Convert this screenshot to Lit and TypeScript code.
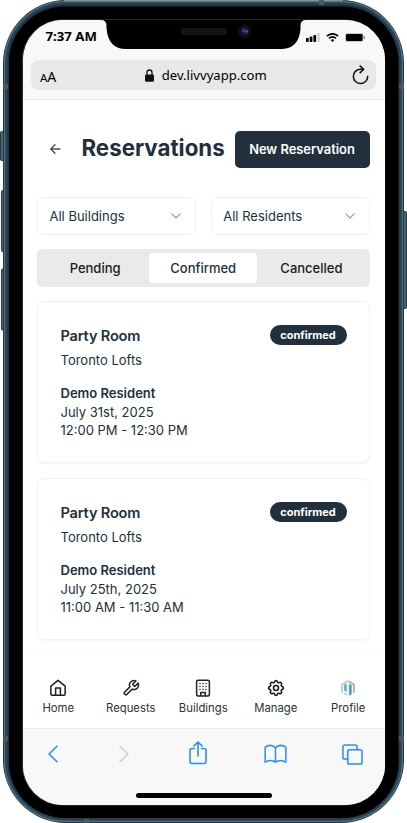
import { LitElement, html, svg, css } from "lit";
import { customElement, property } from "lit/decorators.js";
import { classMap } from "lit/directives/class-map.js";

interface Reservation {
  room: string;
  building: string;
  resident: string;
  date: string;
  time: string;
  status: string;
}

const reservations: Reservation[] = [
  { room: "Party Room", building: "Toronto Lofts", resident: "Demo Resident", date: "July 31st, 2025", time: "12:00 PM - 12:30 PM", status: "confirmed" },
  { room: "Party Room", building: "Toronto Lofts", resident: "Demo Resident", date: "July 25th, 2025", time: "11:00 AM - 11:30 AM", status: "confirmed" },
];

const navIcons: Record<string, unknown> = {
  Home: svg`<path d="M2.500 9.500 12 1.800l9.500 7.700V20a1.800 1.800 0 0 1-1.800 1.800H4.300A1.800 1.800 0 0 1 2.500 20Z"/><path d="M8.800 21.500V12h6.400v9.500"/>`,
  Requests: svg`<path d="M14.700 6.300a1 1 0 0 0 0 1.400l1.600 1.600a1 1 0 0 0 1.400 0l3.770-3.770a6 6 0 0 1-7.940 7.940l-6.910 6.910a2.120 2.120 0 0 1-3-3l6.910-6.910a6 6 0 0 1 7.940-7.940l-3.760 3.760z"/>`,
  Buildings: svg`<rect x="3.500" y="1.500" width="17" height="21" rx="2"/><path d="M9 22v-4h6v4M8 6h.01M16 6h.01M12 6h.01M12 10h.01M12 14h.01M16 10h.01M16 14h.01M8 10h.01M8 14h.01"/>`,
  Manage: svg`<g transform="translate(-1.200 -1.200) scale(1.100)"><path d="M10.325 4.317c.426-1.756 2.924-1.756 3.350 0a1.724 1.724 0 0 0 2.573 1.066c1.543-.94 3.310.826 2.370 2.370a1.724 1.724 0 0 0 1.065 2.572c1.756.426 1.756 2.924 0 3.350a1.724 1.724 0 0 0-1.066 2.573c.94 1.543-.826 3.310-2.370 2.370a1.724 1.724 0 0 0-2.572 1.065c-.426 1.756-2.924 1.756-3.350 0a1.724 1.724 0 0 0-2.573-1.066c-1.543.94-3.310-.826-2.370-2.370a1.724 1.724 0 0 0-1.065-2.572c-1.756-.426-1.756-2.924 0-3.350a1.724 1.724 0 0 0 1.066-2.573c-.94-1.543.826-3.310 2.370-2.370 1 .608 2.296.07 2.572-1.065z"/><circle cx="12" cy="12" r="3"/></g>`,
};

@customElement("reservation-card")
class ReservationCard extends LitElement {
  @property({ attribute: false }) item!: Reservation;

  static styles = css`
    :host { display: block; box-sizing: border-box; height: 162px; border: 1.5px solid #f0f1f1; border-radius: 7px; box-shadow: 0 1px 2px #0000000a; padding: 22px 22px 0 22.500px; color: #222f3c; font-size: 13px; background: #fff; }
    .head { display: flex; justify-content: space-between; align-items: flex-start; height: 25px; }
    .room { font-size: 14.600px; font-weight: 600; line-height: 25px; letter-spacing: -.2px; }
    .badge { height: 20px; width: 77px; border-radius: 10px; background: #222f3c; color: #fff; font-size: 11px; font-weight: 700; line-height: 20px; text-align: center; margin-top: 1px; }
    .building { line-height: 22px; }
    .details { margin-top: 13.200px; line-height: 18.600px; }
    .resident { font-weight: 600; line-height: 18.500px; }
  `;

  render() {
    const r = this.item;
    return html`
      <div class="head"><span class="room">${r.room}</span><span class="badge">${r.status}</span></div>
      <div class="building">${r.building}</div>
      <div class="details">
        <div class="resident">${r.resident}</div>
        <div>${r.date}</div>
        <div>${r.time}</div>
      </div>`;
  }
}

@customElement("app-root")
class AppRoot extends LitElement {
  static styles = css`
    :host { display: block; width: 407px; height: 823px; position: relative; overflow: hidden; background: #fff; font-family: Inter, "Liberation Sans", sans-serif; color: #222f3c; }
    svg { display: block; fill: none; flex: none; }
    .frame { position: absolute; left: 0; top: 0; }
    .screen { position: relative; box-sizing: border-box; width: 362px; height: 785px; margin: 20px 0 0 22.500px; border-radius: 40px; overflow: hidden; background: #fff; display: flex; flex-direction: column; }
    .top { height: 79px; flex: none; background: #f8f8f8; border-bottom: 1px solid #ebebeb; font-family: "Noto Sans", "Open Sans", sans-serif; color: #000; }
    .status { height: 40px; display: flex; justify-content: space-between; position: relative; }
    .notch { position: absolute; left: 78px; top: 0; }
    .time { font-size: 13.200px; font-weight: 700; line-height: 33px; margin-left: 23px; }
    .signals { display: flex; align-items: center; gap: 6px; height: 34px; margin-right: 20px; }
    .address { margin: 0 9px 0 8.500px; height: 30px; border-radius: 8px; background: #e8e8e8; display: flex; align-items: center; justify-content: space-between; padding: 0 6.500px 0 9px; }
    .aa { font-size: 14px; line-height: 30px; padding-top: 5px; width: 18px; white-space: nowrap; }
    .aa small { font-size: 11.500px; }
    .url { display: flex; align-items: center; gap: 7.500px; font-size: 13.100px; margin-left: 2px; }
    .page { flex: 1; min-height: 0; padding: 30px 15px 0 14.500px; }
    .heading { display: flex; align-items: center; height: 38px; }
    .back { margin-left: 12px; }
    h1 { margin: 0 0 0 19.500px; width: 153px; font-size: 22.300px; line-height: 36px; padding-bottom: 2px; font-weight: 700; white-space: nowrap; }
    .new { flex: 1; height: 37px; border-radius: 5px; background: #222f3c; color: #fff; font-size: 12.900px; font-weight: 600; line-height: 37px; text-align: center; white-space: nowrap; }
    .filters { display: grid; grid-template-columns: 1fr 1fr; gap: 15px; margin-top: 29px; }
    .select { box-sizing: border-box; height: 38px; border: 1.500px solid #f0f1f1; border-radius: 5px; display: flex; align-items: center; justify-content: space-between; padding: 0 14px 0 11.500px; font-size: 13px; }
    .tabs { box-sizing: border-box; margin-top: 14px; height: 38px; border-radius: 5px; background: #eaeaea; display: grid; grid-template-columns: repeat(3, 1fr); padding: 4px; font-size: 13px; font-weight: 500; line-height: 30px; text-align: center; color: #181c22; }
    .active { background: #fff; color: #222f3c; border-radius: 4px; }
    .cards { display: flex; flex-direction: column; gap: 15px; margin-top: 14px; }
    .nav { height: 73px; flex: none; border-top: 1px solid #fbfbfb; display: grid; grid-template-columns: repeat(5, 72.500px); margin-left: -.5px; font-size: 11.300px; color: #2b313a; }
    .item { display: flex; flex-direction: column; align-items: center; padding-top: 24px; line-height: 14px; gap: 4px; }
    .item svg { stroke: #1c222b; stroke-width: 2; stroke-linecap: round; stroke-linejoin: round; }
    .browser { height: 77px; flex: none; box-sizing: border-box; background: #f8f8f8; border-top: 1.500px solid #ececec; position: relative; }
    .tools { display: grid; grid-template-columns: 58px 84px 64px 92px 61px; justify-items: center; align-items: center; height: 50px; padding-left: 1px; }
    .tools svg { stroke: #2b8cff; stroke-width: 1.600; stroke-linecap: round; stroke-linejoin: round; }
    .tools .share { margin-top: -2px; }
    .tools .off { stroke: #ceced0; }
    .home { width: 136px; height: 5px; border-radius: 3px; background: #000; margin: 14px auto 0; }
  `;

  private frame() {
    return html`<svg class="frame" width="407" height="823" viewBox="0 0 407 823">
      <g fill="#4d6573" stroke="#263744">
        <rect x=".5" y="131.500" width="5" height="29" rx="1"/>
        <rect x="1.500" y="190.500" width="5" height="61" rx="1"/>
        <rect x="1.500" y="269" width="5" height="61" rx="1"/>
        <rect x="401" y="211.500" width="5.500" height="97" rx="1"/>
      </g>
      <rect x="3" y="0" width="401" height="823" rx="63" fill="#20323f"/>
      <rect x="4.700" y="1.700" width="397.600" height="819.600" rx="61" stroke="#51707f" stroke-width="1.600"/>
      <rect x="6.500" y="3.500" width="394" height="816" rx="59" stroke="#294456" stroke-width="2"/>
      <path d="M64 .6h279" stroke="#81908f" stroke-width="1.200"/>
      <g fill="#4c565c">
        <rect x="3" y="84" width="5" height="5"/><rect x="399" y="84" width="5" height="5"/>
        <rect x="3" y="736" width="5" height="5"/><rect x="399" y="736" width="5" height="5"/>
        <rect x="319" y="0" width="5" height="5"/><rect x="84" y="819" width="5" height="4"/>
      </g>
      <rect x="9" y="6.500" width="389.500" height="811.500" rx="56" fill="#000"/>
      <rect x="22.300" y="19.800" width="362.400" height="785.400" rx="40.200" stroke="#555" stroke-width=".6"/>
    </svg>`;
  }

  private notch() {
    return html`<svg class="notch" width="206" height="30" viewBox="0 0 206 30">
      <path d="M0 0Q5.500 0 5.500 5.500V8Q7 29 25 29H181Q198 28 199.500 9V5.500Q199.500 0 205 0Z" fill="#000"/>
      <rect x="80" y="8" width="46" height="7" rx="3.500" fill="#141415"/>
      <circle cx="143.800" cy="11.300" r="7" fill="#0c0c12"/>
      <circle cx="143.800" cy="11.300" r="4" fill="#17183a"/>
      <circle cx="142.800" cy="10.500" r="2" fill="#2f3480"/>
      <circle cx="145.600" cy="11.500" r="1.200" fill="#2a73a0"/>
    </svg>`;
  }

  private signals() {
    return html`<div class="signals">
      <svg width="14" height="9" viewBox="0 0 14 9"><g fill="#000"><rect y="5" width="2.700" height="4" rx=".7"/><rect x="3.700" y="3.500" width="2.700" height="5.500" rx=".7"/><rect x="7.400" y="2" width="2.700" height="7" rx=".7"/></g><rect x="11.200" width="2.700" height="9" rx=".7" fill="#d2d2d2"/></svg>
      <svg width="13" height="9" viewBox="0 0 13 9" stroke="#000" stroke-width="1.600"><path d="M.8 3.100Q6.500-1.500 12.200 3.100M2.900 5.300Q6.500 2.300 10.100 5.300"/><path d="M4.600 7Q6.500 5.500 8.400 7L6.500 8.900Z" fill="#000" stroke="none"/></svg>
      <svg width="20" height="9" viewBox="0 0 20 9"><rect x=".4" y=".4" width="17.800" height="8.200" rx="2" stroke="#b5b5b5" stroke-width=".8"/><rect x="1" y="1" width="16.600" height="7" rx="1.200" fill="#000"/><path d="M19.300 3v3" stroke="#777"/></svg>
    </div>`;
  }

  private chevron() {
    return html`<svg width="10" height="6" viewBox="0 0 10 6"><path d="M.8.8 5 5 9.200.8" stroke="#9a9fa4" stroke-width="1.200" stroke-linecap="round" stroke-linejoin="round"/></svg>`;
  }

  private profileIcon() {
    return html`<svg width="18" height="18" viewBox="0 0 18 18"><g stroke="none"><path d="M2 5 8.500 1v2.300L4 6.100v8.400L2 13.200Z" fill="#c8c9ca"/><path d="m9.200 1 6.800 4v8.200l-2.200 1.300V6.300L9.200 3.500Z" fill="#b7babc"/><path d="M5.200 5.500 7.600 4.500V13l-2.400-1.500Z" fill="#55adb0"/><path d="m5.200 13 3.300 2v2L5.200 15.200Z" fill="#c8c9ca"/><path d="m8.300 5 1.200.5v9l-1.200-.8Z" fill="#dce4e5"/><path d="m10.200 5 2.400 1.100v9.200l-2.400 1.400Z" fill="#399ba3"/></g></svg>`;
  }

  render() {
    return html`
      ${this.frame()}
      <div class="screen">
        <div class="top">
          <div class="status"><span class="time">7:37 AM</span>${this.signals()}${this.notch()}</div>
          <div class="address">
            <span class="aa"><small>A</small>A</span>
            <span class="url">
              <svg width="9" height="13" viewBox="0 0 9 13"><rect y="5.500" width="9" height="7.300" rx="1.300" fill="#111"/><path d="M2 6V3.500a2.500 2.500 0 0 1 5 0V6" stroke="#111" stroke-width="1.300"/></svg>
              dev.livvyapp.com
            </span>
            <svg width="17" height="20" viewBox="0 0 17 20" stroke="#111" stroke-width="1.500" stroke-linecap="butt" stroke-linejoin="miter"><path d="M15.700 10.800a7.200 7.200 0 1 1-7.200-6.600h2.700"/><path d="m7.700 .6 3.900 3.600-3.900 3.900"/></svg>
          </div>
        </div>
        <div class="page">
          <div class="heading">
            <svg class="back" width="13" height="12" viewBox="0 0 13 12" stroke="#46515c" stroke-width="1.400" stroke-linecap="round" stroke-linejoin="round"><path d="M11 6H2M6 1.700 1.700 6 6 10.300"/></svg>
            <h1>Reservations</h1>
            <div class="new">New Reservation</div>
          </div>
          <div class="filters">
            ${["All Buildings", "All Residents"].map((t) => html`<div class="select">${t}${this.chevron()}</div>`)}
          </div>
          <div class="tabs">
            ${["Pending", "Confirmed", "Cancelled"].map((t) => html`<div class=${classMap({ active: t === "Confirmed" })}>${t}</div>`)}
          </div>
          <div class="cards">${reservations.map((r) => html`<reservation-card .item=${r}></reservation-card>`)}</div>
        </div>
        <div class="nav">
          ${Object.entries(navIcons).map(([label, icon]) => html`<div class="item"><svg width="18" height="18" viewBox="0 0 24 24">${icon}</svg>${label}</div>`)}
          <div class="item">${this.profileIcon()}Profile</div>
        </div>
        <div class="browser">
          <div class="tools">
            <svg width="12" height="18" viewBox="0 0 12 18"><path d="M10 1.200 2 9l8 7.800"/></svg>
            <svg class="off" width="12" height="18" viewBox="0 0 12 18"><path d="m2 1.200 8 7.800-8 7.800"/></svg>
            <svg class="share" width="18" height="24" viewBox="0 0 18 24"><path d="M5.500 7.500H2.800A1.800 1.800 0 0 0 1 9.300v11.400a1.800 1.800 0 0 0 1.800 1.800h12.400a1.800 1.800 0 0 0 1.800-1.800V9.300a1.800 1.800 0 0 0-1.800-1.800h-2.700M9 15V1.200M4.800 5 9 1.100 13.200 5"/></svg>
            <svg width="23" height="20" viewBox="0 0 24 20"><path d="M12 18.500V3.500Q9.500 1 6.500 1T1.200 3v15.500Q4 16.700 6.800 16.700T12 18.500Q14.500 16.700 17.200 16.700t5.600 1.800V3Q20.500 1 17.500 1T12 3.500"/></svg>
            <svg width="21" height="21" viewBox="0 0 22 22"><rect x="6" y="6" width="15" height="15" rx="2"/><path d="M6 15.800H3a2 2 0 0 1-2-2V3a2 2 0 0 1 2-2h10.800a2 2 0 0 1 2 2v3"/></svg>
          </div>
          <div class="home"></div>
        </div>
      </div>`;
  }
}
